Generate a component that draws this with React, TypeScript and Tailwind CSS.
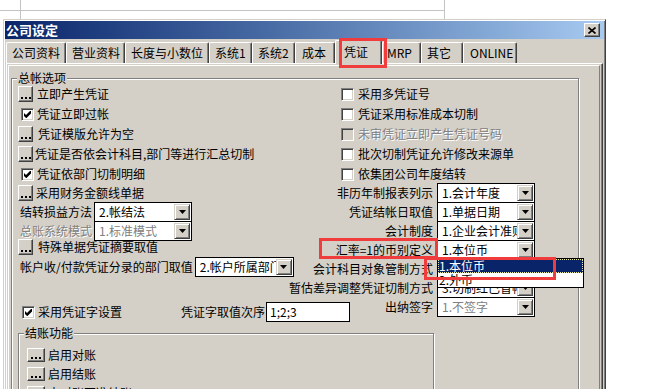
import React from "react";

function Dots({ small }: { small?: boolean }) {
  return (
    <div
      className={
        small
          ? "flex h-[14px] w-[18px] shrink-0 items-end justify-center border border-t-white border-l-white border-r-[#404040] border-b-[#404040] bg-[#d4d0c8] pb-[2px] shadow-[inset_-1px_-1px_0_#808080]"
          : "flex h-[16px] w-[15px] shrink-0 items-end justify-center border border-t-white border-l-white border-r-[#404040] border-b-[#404040] bg-[#d4d0c8] pb-[2px] shadow-[inset_-1px_-1px_0_#808080]"
      }
    >
      <div className="flex gap-[2px]">
        <i className="block h-[2px] w-[2px] bg-black" />
        <i className="block h-[2px] w-[2px] bg-black" />
        <i className="block h-[2px] w-[2px] bg-black" />
      </div>
    </div>
  );
}

function Check({ checked, disabled }: { checked?: boolean; disabled?: boolean }) {
  return (
    <div
      className={
        "flex h-[13px] w-[13px] shrink-0 items-center justify-center border border-t-[#808080] border-l-[#808080] border-r-white border-b-white shadow-[inset_1px_1px_0_#404040,inset_-1px_-1px_0_#d4d0c8] " +
        (disabled ? "bg-[#d4d0c8]" : "bg-white")
      }
    >
      {checked && (
        <svg width="7" height="7" viewBox="0 0 7 7">
          <path d="M0 2L2 4L6 0H7V2.5L2.5 7H2L0 5Z" fill="#000" />
        </svg>
      )}
    </div>
  );
}

function Combo({
  value,
  className,
  disabled,
}: {
  value: string;
  className: string;
  disabled?: boolean;
}) {
  return (
    <div className={"flex h-[20px] shrink-0 items-center border border-black bg-white " + className}>
      <span
        className={
          "min-w-0 flex-1 overflow-hidden whitespace-nowrap pl-[4px] leading-[14px] " +
          (disabled ? "text-[#808080]" : "text-black")
        }
      >
        {value}
      </span>
      <div className="mr-[1px] flex h-[16px] w-[16px] shrink-0 items-center justify-center border border-t-[#d4d0c8] border-l-[#d4d0c8] border-r-[#404040] border-b-[#404040] bg-[#d4d0c8] shadow-[inset_1px_1px_0_#fff,inset_-1px_-1px_0_#808080]">
        <svg width="7" height="4" viewBox="0 0 7 4">
          <path d="M0 0H7L3.5 4Z" fill="#000" />
        </svg>
      </div>
    </div>
  );
}

const tabs: { label: string; w: string; pl: string; selected?: boolean }[] = [
  { label: "公司资料", w: "w-[60px]", pl: "pl-[5px]" },
  { label: "营业资料", w: "w-[59px]", pl: "pl-[5px]" },
  { label: "长度与小数位", w: "w-[84px]", pl: "pl-[5px]" },
  { label: "系统1", w: "w-[43px]", pl: "pl-[5px]" },
  { label: "系统2", w: "w-[43px]", pl: "pl-[5px]" },
  { label: "成本", w: "w-[40px]", pl: "pl-[6px]" },
  { label: "凭证", w: "w-[47px]", pl: "pl-[8px]", selected: true },
  { label: "MRP", w: "w-[39px]", pl: "pl-[4px]" },
  { label: "其它", w: "w-[42px]", pl: "pl-[5px]" },
  { label: "ONLINE", w: "w-[54px]", pl: "pl-[6px]" },
];

const disabledText = "text-[#808080] [text-shadow:1px_1px_0_#fff]";

export default function App() {
  return (
    <div className="h-[389px] w-[657px] overflow-hidden bg-white font-['Noto_Sans_CJK_SC',sans-serif] text-[12px] leading-[14px] text-black">
      {/* background sheet grid */}
      <div className="grid h-[19px] grid-cols-[21px_424px_1fr] grid-rows-[11px_8px]">
        <div className="border-b border-r border-[#c4c4c4]" />
        <div className="border-b border-r border-[#c4c4c4]" />
        <div />
        <div className="border-r border-[#c4c4c4]" />
        <div className="border-r border-[#c4c4c4]" />
        <div />
      </div>

      {/* dialog */}
      <div className="ml-[3px] flex h-[400px] w-[603px] flex-col border border-t-[#d4d0c8] border-l-[#d4d0c8] border-r-[#404040] border-b-[#404040] bg-[#d4d0c8] p-[1px] shadow-[inset_1px_1px_0_#fff,inset_-1px_-1px_0_#808080]">
        {/* title bar */}
        <div className="flex h-[18px] shrink-0 items-center justify-between bg-linear-to-r from-[#0a246a] to-[#a6caf0] pl-[1px] pr-[4px]">
          <span className="text-[13px] font-bold leading-[16px] text-white">公司设定</span>
          <div className="flex h-[14px] w-[16px] items-center justify-center border border-t-white border-l-white border-r-[#404040] border-b-[#404040] bg-[#d4d0c8] shadow-[inset_-1px_-1px_0_#808080]">
            <svg width="8" height="7" viewBox="0 0 8 7">
              <path d="M0.5 0.5L7.5 6.5M7.5 0.5L0.5 6.5" stroke="#000" strokeWidth="1.6" />
            </svg>
          </div>
        </div>

        {/* tabs */}
        <div className="relative z-10 flex h-[24px] shrink-0 items-end pl-[1px]">
          {tabs.map((t) =>
            t.selected ? (
              <div
                key={t.label}
                className={
                  "relative mb-[-1px] flex h-[24px] shrink-0 items-center rounded-t-[2px] border-l border-t border-r border-l-white border-t-white border-r-[#404040] bg-[#d4d0c8] pb-[2px] shadow-[inset_-1px_0_0_#808080] " +
                  t.w +
                  " " +
                  t.pl
                }
              >
                {t.label}
                <div className="pointer-events-none absolute left-[3px] top-[-3px] h-[30px] w-[48px] border-[3px] border-[#f03c3c]" />
              </div>
            ) : (
              <div
                key={t.label}
                className={
                  "flex h-[21px] shrink-0 items-center rounded-t-[2px] border-l border-t border-r border-l-white border-t-white border-r-[#404040] shadow-[inset_-1px_0_0_#808080] " +
                  t.w +
                  " " +
                  t.pl
                }
              >
                {t.label}
              </div>
            )
          )}
        </div>

        {/* tab page */}
        <div className="ml-[1px] flex w-[597px] flex-1 flex-col border-t border-l border-r border-t-white border-l-white border-r-[#404040] shadow-[inset_-1px_0_0_#808080]">
          <div className="ml-[1px] mr-[2px] mt-[1px] flex flex-1 flex-col border-t border-l border-r border-t-white border-l-white border-r-[#808080] pl-[2px]">
            {/* group 总帐选项 */}
            <div className="relative mt-[12px] w-[568px] flex-1 border border-[#808080] pt-[5px] shadow-[inset_1px_1px_0_#fff,1px_1px_0_#fff]">
              <span className="absolute left-[5px] top-[-7px] bg-[#d4d0c8] px-[1px] leading-[12px]">总帐选项</span>

              <div className="flex">
                {/* left column */}
                <div className="flex w-[277px] shrink-0 flex-col pl-[6px]">
                  <div className="flex h-[20px] items-center gap-[4px]">
                    <Dots />
                    <span>立即产生凭证</span>
                  </div>
                  <div className="flex h-[20px] items-center gap-[3px] pl-[3px]">
                    <Check checked />
                    <span>凭证立即过帐</span>
                  </div>
                  <div className="flex h-[20px] items-center gap-[5px]">
                    <Dots />
                    <span>凭证模版允许为空</span>
                  </div>
                  <div className="flex h-[20px] items-center gap-[2px] whitespace-nowrap">
                    <Dots />
                    <span>凭证是否依会计科目,部门等进行汇总切制</span>
                  </div>
                  <div className="flex h-[20px] items-center gap-[3px] pl-[3px]">
                    <Check checked />
                    <span>凭证依部门切制明细</span>
                  </div>
                  <div className="flex h-[18px] items-center gap-[3px]">
                    <Dots />
                    <span>采用财务金额线单据</span>
                  </div>
                  <div className="flex h-[19px] items-start gap-[2px] pl-[2px]">
                    <span className="flex h-[20px] items-center">结转损益方法</span>
                    <Combo className="w-[98px]" value="2.帐结法" />
                  </div>
                  <div className="flex h-[17px] items-start gap-[2px] pl-[2px]">
                    <span className={"flex h-[19px] items-center " + disabledText}>总账系统模式</span>
                    <Combo className="h-[19px] w-[98px]" value="1.标准模式" disabled />
                  </div>
                  <div className="flex h-[18px] items-center gap-[5px]">
                    <Dots />
                    <span>特殊单据凭证摘要取值</span>
                  </div>
                  <div className="flex h-[22px] items-center gap-[2px] whitespace-nowrap pl-[2px]">
                    <span>帐户收/付款凭证分录的部门取值</span>
                    <Combo className="w-[99px]" value="2.帐户所属部门" />
                  </div>
                  <div className="mt-[24px] flex h-[20px] w-max items-center whitespace-nowrap pl-[4px]">
                    <Check checked />
                    <span className="ml-[3px]">采用凭证字设置</span>
                    <span className="ml-[59px]">凭证字取值次序</span>
                    <div className="ml-[1px] flex h-[20px] w-[84px] items-center border border-black bg-white pl-[3px]">
                      1;2;3
                    </div>
                  </div>
                </div>

                {/* right column */}
                <div className="flex w-[289px] shrink-0 flex-col">
                  {[
                    { t: "采用多凭证号" },
                    { t: "凭证采用标准成本切制" },
                    { t: "未审凭证立即产生凭证号码", d: true },
                    { t: "批次切制凭证允许修改来源单" },
                    { t: "依集团公司年度结转" },
                  ].map((r) => (
                    <div key={r.t} className="flex h-[20px] items-center gap-[4px] pl-[52px]">
                      <Check disabled={r.d} />
                      <span className={r.d ? disabledText : ""}>{r.t}</span>
                    </div>
                  ))}
                  <div className="-mt-[1px] flex flex-col">
                    {[
                      { l: "非历年制报表列示", v: "1.会计年度" },
                      { l: "凭证结帐日取值", v: "1.单据日期" },
                      { l: "会计制度", v: "1.企业会计准则" },
                    ].map((r) => (
                      <div key={r.l} className="flex h-[19px] items-start whitespace-nowrap">
                        <span className="flex h-[20px] w-[144px] items-center justify-end">{r.l}</span>
                        <Combo className="ml-[4px] w-[98px]" value={r.v} />
                      </div>
                    ))}
                    <div className="relative flex h-[19px] items-start whitespace-nowrap">
                      <span className="flex h-[20px] w-[144px] items-center justify-end">汇率=1的币别定义</span>
                      <Combo className="ml-[4px] w-[98px]" value="1.本位币" />
                      <div className="pointer-events-none absolute left-[30px] top-[-2px] h-[21px] w-[119px] border-[3px] border-[#f03c3c]" />
                      <div className="absolute left-[148px] top-[18px] z-10 w-[147px] border border-black bg-white">
                        <div className="h-[14px] bg-[#0a246a] pl-[1px] leading-[14px] text-white outline-1 -outline-offset-1 outline-dotted outline-[#e8e8a0]">
                          1.本位币
                        </div>
                        <div className="h-[14px] pl-[1px] leading-[14px]">2.外币</div>
                      </div>
                      <div className="pointer-events-none absolute left-[135px] top-[17px] z-20 h-[23px] w-[132px] border-[3px] border-[#f03c3c]" />
                    </div>
                    <div className="flex h-[19px] items-start whitespace-nowrap">
                      <span className="flex h-[20px] w-[144px] items-center justify-end">会计科目对象管制方式</span>
                      <Combo className="ml-[4px] w-[98px]" value="1.依科目设定" />
                    </div>
                    <div className="flex h-[19px] items-start whitespace-nowrap">
                      <span className="flex h-[20px] w-[144px] items-center justify-end">暂估差异调整凭证切制方式</span>
                      <Combo className="ml-[4px] w-[98px]" value="3.切制红已冒帐" />
                    </div>
                    <div className="flex h-[19px] items-start whitespace-nowrap">
                      <span className="flex h-[20px] w-[144px] items-center justify-end">出纳签字</span>
                      <Combo className="ml-[4px] w-[98px]" value="1.不签字" disabled />
                    </div>
                  </div>
                </div>
              </div>

              {/* group 结账功能 */}
              <div className="relative ml-[6px] mt-[11px] h-[80px] w-[416px] border border-[#808080] pl-[8px] pt-[11px] shadow-[inset_1px_1px_0_#fff,1px_1px_0_#fff]">
                <span className="absolute left-[5px] top-[-7px] bg-[#d4d0c8] px-[1px] leading-[12px]">结账功能</span>
                {["启用对账", "启用结账", "未对账不准结账"].map((t) => (
                  <div key={t} className="flex h-[19px] items-center gap-[3px]">
                    <Dots small />
                    <span>{t}</span>
                  </div>
                ))}
              </div>
            </div>
          </div>
        </div>
      </div>
    </div>
  );
}
